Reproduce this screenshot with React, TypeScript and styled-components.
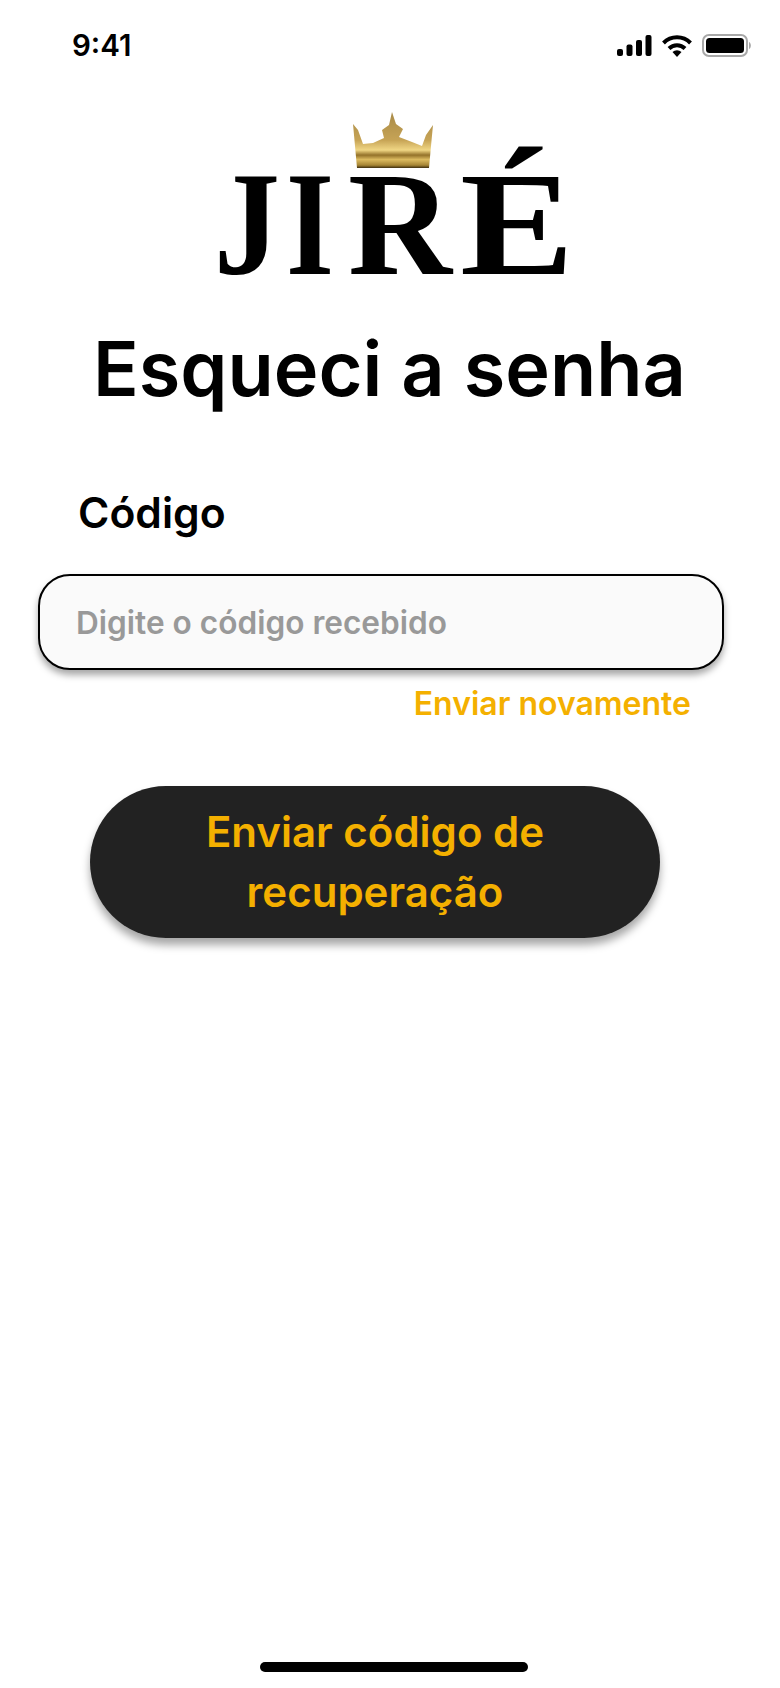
import React from "react";
import styled, { createGlobalStyle } from "styled-components";

const Global = createGlobalStyle`
  html, body { margin: 0; padding: 0; background: #fff; }
  * { box-sizing: border-box; }
  #root { width: 780px; height: 1688px; }
`;

const Screen = styled.div`
  width: 780px;
  height: 1688px;
  display: flex;
  flex-direction: column;
  background: #fff;
  font-family: Inter, "Liberation Sans", sans-serif;
  overflow: hidden;
`;

const StatusBar = styled.div`
  height: 108px;
  padding: 28px 28px 0 72px;
  display: flex;
  justify-content: space-between;
  align-items: flex-start;
  flex: none;
`;

const Clock = styled.span`
  font-weight: 600;
  font-size: 29.5px;
  line-height: 34px;
  color: #000;
`;

const StatusIcons = styled.div`
  display: flex;
  align-items: center;
  gap: 10px;
  padding-top: 6px;
`;

const LogoMark = styled.svg`
  display: block;
  flex: none;
  margin-left: 200px;
  width: 380px;
  height: 218px;
  margin-top: -8px;
`;

const Title = styled.h1`
  margin: 7px 0 0 0;
  padding-left: 93px;
  font-size: 75.6px;
  line-height: 88px;
  font-weight: 600;
  color: #000;
  white-space: nowrap;
`;

const FieldLabel = styled.div`
  margin: 74px 0 0 78px;
  font-size: 42.6px;
  line-height: 52px;
  font-weight: 600;
  color: #000;
`;

const FieldBox = styled.div`
  margin: 35px 0 0 38px;
  width: 686px;
  height: 96px;
  border: 2px solid #000;
  border-radius: 32px;
  background: #fafafa;
  box-shadow: 0 5px 7px rgba(0, 0, 0, 0.35);
  display: flex;
  align-items: center;
  padding-left: 36px;
`;

const Placeholder = styled.span`
  font-size: 31.6px;
  font-weight: 600;
  color: #999;
`;

const ResendLink = styled.div`
  margin: 15px 0 0 0;
  padding-right: 89px;
  text-align: right;
  font-size: 32px;
  line-height: 38px;
  font-weight: 600;
  color: #f4b000;
`;

const SubmitButton = styled.button`
  margin: 63px 0 0 90px;
  width: 570px;
  height: 152px;
  border: none;
  border-radius: 76px;
  background: #222;
  color: #f4b000;
  font-family: inherit;
  font-size: 42px;
  line-height: 60px;
  font-weight: 600;
  padding: 0 90px;
  box-shadow: 0 7px 9px rgba(0, 0, 0, 0.35);
`;

const Spacer = styled.div`
  flex: 1;
`;

const HomeBar = styled.div`
  flex: none;
  width: 268px;
  height: 10px;
  margin: 0 0 16px 260px;
  border-radius: 5px;
  background: #000;
`;

const SignalIcon = () => (
  <svg width="35" height="21" viewBox="0 0 35 21">
    <rect x="0" y="14" width="6" height="7" rx="2" fill="#000" />
    <rect x="9.5" y="9.5" width="6" height="11.5" rx="2" fill="#000" />
    <rect x="19" y="5" width="6" height="16" rx="2" fill="#000" />
    <rect x="28.5" y="0" width="6" height="21" rx="2" fill="#000" />
  </svg>
);

const WifiIcon = () => (
  <svg width="30" height="22" viewBox="0 0 30 22" fill="none" stroke="#000" strokeWidth="4">
    <path d="M1.5 8 A19 19 0 0 1 28.5 8" />
    <path d="M7 13.5 A11.5 11.5 0 0 1 23 13.5" />
    <path d="M15 22 L10.5 17 A6.5 6.5 0 0 1 19.5 17 Z" fill="#000" stroke="none" />
  </svg>
);

const BatteryIcon = () => (
  <svg width="50" height="23" viewBox="0 0 50 23">
    <rect x="1" y="1" width="44" height="21" rx="6" fill="none" stroke="#a8a8a8" strokeWidth="2" />
    <rect x="4" y="4" width="38" height="15" rx="3.5" fill="#000" />
    <path d="M47 8 C49.5 9 49.5 14 47 15 Z" fill="#a8a8a8" />
  </svg>
);

const Logo = () => (
  <LogoMark viewBox="0 0 380 218">
    <defs>
      <linearGradient id="gold" x1="0" y1="0" x2="0" y2="1">
        <stop offset="0" stopColor="#a88a48" />
        <stop offset="0.5" stopColor="#c6a355" />
        <stop offset="0.68" stopColor="#f0d684" />
        <stop offset="0.77" stopColor="#94722a" />
        <stop offset="0.85" stopColor="#dcbb60" />
        <stop offset="0.95" stopColor="#a58434" />
        <stop offset="1" stopColor="#3d2e0c" />
      </linearGradient>
      <filter id="soft" x="-5%" y="-5%" width="110%" height="110%">
        <feGaussianBlur stdDeviation="0.6" />
      </filter>
    </defs>
    <path
      fill="url(#gold)"
      filter="url(#soft)"
      d="M153 24 L158 30 L163 44 L173 43 L184 38 L182 30 L189 25 L192 12 L196 24 L203 29 L199 37 L212 42 L222 46 L226 35 L233 25 L231 46 L229 68 H157 L155 46 Z"
    />
    <g fontFamily="'Liberation Serif', serif" fontWeight="700" fontSize="148" fill="#000">
      <text x="14" y="174" textLength="66" lengthAdjust="spacingAndGlyphs">J</text>
      <text x="86" y="174" textLength="48" lengthAdjust="spacingAndGlyphs">I</text>
      <text x="148" y="174" textLength="104" lengthAdjust="spacingAndGlyphs">R</text>
      <text x="260" y="174" textLength="114" lengthAdjust="spacingAndGlyphs">É</text>
    </g>
  </LogoMark>
);

export default function App() {
  return (
    <Screen>
      <Global />
      <StatusBar>
        <Clock>9:41</Clock>
        <StatusIcons>
          <SignalIcon />
          <WifiIcon />
          <BatteryIcon />
        </StatusIcons>
      </StatusBar>
      <Logo />
      <Title>Esqueci a senha</Title>
      <FieldLabel>Código</FieldLabel>
      <FieldBox>
        <Placeholder>Digite o código recebido</Placeholder>
      </FieldBox>
      <ResendLink>Enviar novamente</ResendLink>
      <SubmitButton>Enviar código de recuperação</SubmitButton>
      <Spacer />
      <HomeBar />
    </Screen>
  );
}
